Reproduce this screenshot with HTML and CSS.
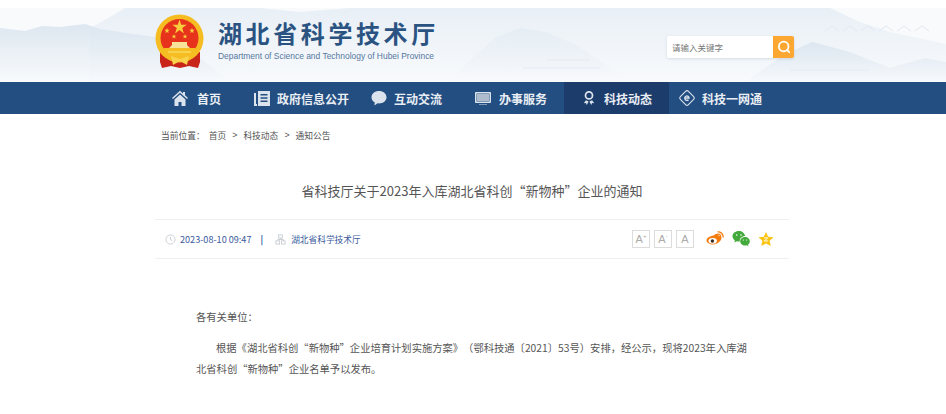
FILE: index.html
```html
<!DOCTYPE html>
<html lang="zh-CN">
<head>
  <meta charset="UTF-8" />
  <title>省科技厅关于2023年入库湖北省科创“新物种”企业的通知</title>
  <link rel="stylesheet" href="styles.css">
</head>
<body>
  <header class="banner">
    <svg class="banner-bg" viewBox="0 0 946 74" preserveAspectRatio="none" aria-hidden="true">
      <defs>
        <linearGradient id="fade" x1="0" y1="0" x2="0" y2="1">
          <stop offset="0" stop-color="#dde7f0"/>
          <stop offset="1" stop-color="#dde7f0" stop-opacity="0"/>
        </linearGradient>
        <linearGradient id="fadeLight" x1="0" y1="0" x2="0" y2="1">
          <stop offset="0" stop-color="#e8eff6"/>
          <stop offset="1" stop-color="#e8eff6" stop-opacity="0"/>
        </linearGradient>
      </defs>
      <path fill="url(#fadeLight)" d="M90 20L112 8 125 0H260L300 4 350 0H830L860 14 890 24 946 36V74H90Z"/>
      <path fill="url(#fade)" d="M0 20L25 23 42 18 60 19 85 16 100 21 120 24 160 30 200 50 230 74H0Z"/>
      <path fill="url(#fade)" opacity=".45" d="M470 52L495 30 520 20 545 24 575 36 610 60 630 74H450Z"/>
      <path fill="url(#fade)" d="M745 74L785 46 812 34 850 44 890 60 925 50 946 54V74Z"/>
      <path fill="none" stroke="#e0e9f2" d="M825 23l7-5 7 5M843 23l7-5 7 5M861 23l7-5 7 5M879 23l7-5 7 5M897 23l7-5 7 5M915 23l7-5 7 5"/>
      <path fill="none" stroke="#e3ebf3" d="M523 60H600M547 52H590M790 62H870"/>
    </svg>
    <div class="banner-inner">
      <div class="brand">
        <svg class="emblem" viewBox="0 0 50 54" aria-hidden="true">
          <path fill="#c8241a" d="M5 38h40v10l-2 6-9-2-9 2-9-2-9 2-2-6z"/>
          <circle cx="24.500" cy="24.500" r="24" fill="#f5bd22"/>
          <circle cx="24.500" cy="24" r="19" fill="#e8331c"/>
          <path fill="#f7cf3c" d="M24.500 5.500l1.700 5.300h5.500l-4.500 3.300 1.700 5.300-4.400-3.300-4.400 3.300 1.700-5.300-4.500-3.300h5.500zM12 13.800l.7 2h2.100l-1.700 1.300.6 2-1.700-1.200-1.700 1.200.6-2-1.700-1.300h2.100zM37 13.800l.7 2h2.100l-1.700 1.300.6 2-1.700-1.200-1.700 1.200.6-2-1.700-1.300h2.100zM19 20l.6 1.700h1.800l-1.400 1.100.5 1.700-1.500-1-1.500 1 .5-1.700-1.400-1.100h1.800zM30 20l.6 1.700h1.800l-1.400 1.100.5 1.700-1.500-1-1.500 1 .5-1.700-1.400-1.100h1.800z"/>
          <path fill="#f8e39a" d="M17 28h15v3l3 3H14l3-3z"/>
          <path fill="#f5bd22" d="M9 34h31l3 4-3 4-15 4-15-4-3-4z"/>
          <path fill="#f9d24e" d="M13 37h23v2H13zM16 42l9 3 9-3-2 9-7-4-7 4z"/>
        </svg>
        <div class="brand-text">
          <div class="brand-name">湖北省科学技术厅</div>
          <div class="brand-en">Department of Science and Technology of Hubei Province</div>
        </div>
      </div>
      <form class="search">
        <input class="search-input" type="text" placeholder="请输入关键字" />
        <button class="search-btn" type="button" aria-label="搜索">
          <svg viewBox="0 0 14 14" width="14" height="14"><circle cx="6.700" cy="6.500" r="4.800" fill="none" stroke="#fff" stroke-width="1.800"/><path d="M10 10l2.200 2.200" stroke="#fff" stroke-width="1.800" stroke-linecap="round"/></svg>
        </button>
      </form>
    </div>
  </header>

  <nav class="nav">
    <ul class="nav-list">
      <li class="nav-item home">
        <svg viewBox="0 0 16 16" width="16" height="16"><path fill="#dbe3ec" d="M8 .8L0 8l1 1 7-6.200L15 9l1-1-3-2.700V2h-2v1.500zM2.500 9.500V16h4v-4h3v4h4V9.500L8 4.500z"/></svg>
        首页
      </li>
      <li class="nav-item gov">
        <svg viewBox="0 0 16 16" width="16" height="16"><path fill="#dbe3ec" d="M0 3h2v11h1v2H0zM4 1h12v15H4zM6.500 4v1.500h7V4zm0 3.200v1.500h7V7.200zm0 3.300V12h7v-1.500z" fill-rule="evenodd"/></svg>
        政府信息公开
      </li>
      <li class="nav-item talk">
        <svg viewBox="0 0 16 16" width="16" height="16"><path fill="#dbe3ec" d="M8 1c4.200 0 7.500 2.700 7.500 6.200S12.200 13.400 8 13.400c-.5 0-1 0-1.500-.1L3.500 15.500l.2-3.200C1.700 11.200.5 9.300.5 7.200.5 3.700 3.800 1 8 1z"/></svg>
        互动交流
      </li>
      <li class="nav-item work">
        <svg viewBox="0 0 16 16" width="16" height="16"><path fill="#dbe3ec" d="M1 2h14a1 1 0 0 1 1 1v9a1 1 0 0 1-1 1H1a1 1 0 0 1-1-1V3a1 1 0 0 1 1-1zm.5 1.500v8h13v-8zM4 14.500h8V15H4z" fill-rule="evenodd"/><path fill="#aebccd" d="M2 4h12v7H2z"/></svg>
        办事服务
      </li>
      <li class="nav-item news active">
        <svg viewBox="0 0 16 16" width="14" height="16"><path fill="#dbe3ec" d="M8 0a5 5 0 1 1 0 10A5 5 0 0 1 8 0zm0 2a3 3 0 1 0 0 6 3 3 0 0 0 0-6zM4.500 10.500L2 14l2.500-.3L5.500 16l2-4zM11.500 10.500L14 14l-2.500-.3-1 2.300-2-4z" fill-rule="evenodd"/></svg>
        科技动态
      </li>
      <li class="nav-item net">
        <svg viewBox="0 0 18 18" width="18" height="18"><rect x="3.300" y="3.300" width="11.400" height="11.400" rx="2" transform="rotate(45 9 9)" fill="none" stroke="#dbe3ec" stroke-width="1.100"/><path fill="none" stroke="#dbe3ec" stroke-width="1.300" d="M6.700 9h4.400a2.200 2.200 0 1 0-.6 1.700"/></svg>
        科技一网通
      </li>
    </ul>
  </nav>

  <main class="page">
    <div class="crumbs">
      <span class="crumbs-label">当前位置：</span>
      <a>首页</a><span class="sep">&gt;</span><a>科技动态</a><span class="sep">&gt;</span><a>通知公告</a>
    </div>

    <h1 class="title">省科技厅关于2023年入库湖北省科创“新物种”企业的通知</h1>

    <div class="meta">
      <div class="meta-left">
        <svg viewBox="0 0 12 12" width="11" height="11"><circle cx="6" cy="6" r="5" fill="none" stroke="#c9cdd2"/><path d="M6 3v3.200l2 1" fill="none" stroke="#c9cdd2"/></svg>
        <span class="date">2023-08-10 09:47</span>
        <span class="bar">|</span>
        <svg viewBox="0 0 12 12" width="11" height="11"><g fill="none" stroke="#c9cdd2"><rect x="4" y="1" width="4" height="3.500"/><rect x="1" y="7.500" width="4" height="3.500"/><rect x="7" y="7.500" width="4" height="3.500"/><path d="M6 4.500V6M3 7.500V6h6v1.500"/></g></svg>
        <span class="source">湖北省科学技术厅</span>
      </div>
      <div class="meta-right">
        <span class="font-btn">A<sup>+</sup></span>
        <span class="font-btn">A<sup>-</sup></span>
        <span class="font-btn">A</span>
        <svg class="share first" viewBox="0 0 18 16" width="18" height="16"><path fill="#f47c0e" d="M7.500 4.500c2.200-1.900 4.500-2.200 5-1.100.3.700.2 1.300 0 1.900 1.500-.5 3-.2 3 1.500 0 3.200-4.300 6.700-8.500 6.700-3.200 0-6.500-1.700-6.500-4.300 0-1.700 3-4.300 7-4.700z"/><ellipse cx="6.700" cy="9.800" rx="4.200" ry="2.900" fill="#fff"/><circle cx="6.400" cy="10" r="1.700" fill="#3a2a20"/><path fill="none" stroke="#f47c0e" stroke-width="1.300" d="M11.500 .9c3-.4 6 1.900 5.600 5.600M11.800 3.100c1.500-.2 3 .9 2.800 2.600"/></svg>
        <svg class="share" viewBox="0 0 18 16" width="18" height="16"><path fill="#43a93c" d="M6.800 0C3.300 0 .5 2.300.5 5.300c0 1.700 1 3.200 2.400 4.200l-.6 2 2.300-1.200c.7.200 1.400.3 2.200.3.400 0 .6 0 .9-.1C7.500 7.300 10 5 13.200 5 12.600 2.100 10 0 6.800 0z"/><path fill="#43a93c" d="M17.800 10.200c0-2.400-2.200-4.300-4.800-4.300S8.200 7.800 8.200 10.200s2.200 4.300 4.800 4.300c.6 0 1.200-.1 1.800-.3l1.700 1-.5-1.600c1.100-.8 1.800-2 1.800-3.400z"/><circle cx="4.700" cy="4" r=".8" fill="#fff"/><circle cx="9" cy="4" r=".8" fill="#fff"/><circle cx="11.400" cy="9" r=".6" fill="#fff"/><circle cx="14.600" cy="9" r=".6" fill="#fff"/></svg>
        <svg class="share" viewBox="0 0 18 16" width="16" height="16"><path fill="#fbc415" d="M9 0l2.500 5.400 6 .7-4.400 4 1.200 5.900L9 13l-5.300 3 1.200-5.900-4.400-4 6-.7z"/><path fill="none" stroke="#fff" stroke-width="1" d="M6.800 6.800h4.200L7 10.200h4.300"/></svg>
      </div>
    </div>

    <div class="article">
      <p class="salute">各有关单位：</p>
      <p class="body-text">根据《湖北省科创“新物种”企业培育计划实施方案》（鄂科技通〔2021〕53号）安排，经公示，现将2023年入库湖北省科创“新物种”企业名单予以发布。</p>
    </div>
  </main>
</body>
</html>
```

FILE: styles.css
```css
* { box-sizing: border-box; }
html, body { height: 100%; }
body {
  margin: 0;
  padding-top: 8px;
  background: #fff;
  color: #333;
  font-family: "Noto Sans CJK SC", "Liberation Sans", sans-serif;
  text-spacing-trim: space-all;
  overflow: hidden;
}
ul { margin: 0; padding: 0; list-style: none; }

.banner {
  position: relative;
  height: 74px;
  overflow: hidden;
  background: #f8fafc;
}
.banner-bg {
  position: absolute;
  left: 0;
  top: 0;
  width: 100%;
  height: 100%;
}
.banner-inner {
  position: relative;
  width: 639px;
  height: 100%;
  margin-left: 155px;
  display: flex;
  justify-content: space-between;
  align-items: flex-start;
}
.brand { display: flex; padding-top: 6px; }
.emblem { width: 50px; height: 54px; }
.brand-text { margin-left: 13px; padding-top: 6px; }
.brand-name {
  font-size: 24px;
  line-height: 26px;
  font-weight: 700;
  letter-spacing: 3.600px;
  color: #2b5382;
}
.brand-en {
  margin-top: 4px;
  font-family: "Liberation Sans", sans-serif;
  font-size: 8.450px;
  line-height: 12px;
  color: #55779f;
  white-space: nowrap;
}
.search {
  display: flex;
  margin-top: 28px;
  height: 22px;
  width: 127px;
  border-radius: 2px;
  overflow: hidden;
  box-shadow: 0 1px 3px rgba(100, 120, 150, .2);
}
.search-input {
  flex: 1;
  min-width: 0;
  border: none;
  background: #fff;
  padding: 0 5px;
  font-size: 8.500px;
  font-family: inherit;
}
.search-input::placeholder { color: #777; }
.search-btn {
  width: 21px;
  padding: 0;
  border: none;
  background: #fda733;
  display: flex;
  align-items: center;
  justify-content: center;
}

.nav {
  height: 32px;
  background: #234e82;
}
.nav-list {
  display: flex;
  height: 100%;
  margin-left: 155px;
}
.nav-item {
  display: flex;
  align-items: center;
  gap: 8px;
  height: 100%;
  font-size: 12px;
  font-weight: 700;
  color: #e9eef4;
  white-space: nowrap;
}
.home { padding-left: 17px; width: 82px; gap: 9px; }
.gov { padding-left: 17px; width: 120px; gap: 7px; }
.talk { padding-left: 14px; width: 104px; gap: 7px; }
.work { padding-left: 14px; width: 103px; }
.news { padding-left: 18px; width: 105px; }
.net { padding-left: 9px; gap: 6px; }
.active { background: #1c3c6b; }

.page {
  width: 634px;
  margin-left: 155px;
}
.crumbs {
  display: flex;
  align-items: center;
  height: 42px;
  padding-left: 6px;
  font-size: 8.750px;
  color: #555;
}
.crumbs-label { margin-right: 4px; }
.sep { margin: 0 6px; font-family: "Liberation Sans", sans-serif; }
.title {
  margin: 0;
  padding-top: 24px;
  height: 63px;
  line-height: 22px;
  font-size: 13px;
  font-weight: 400;
  color: #555;
  text-align: center;
}
.meta {
  display: flex;
  align-items: center;
  justify-content: space-between;
  height: 40px;
  border-top: 1px solid #f0f0f0;
  border-bottom: 1px solid #f0f0f0;
  padding-left: 10px;
}
.meta-left, .meta-right { display: flex; align-items: center; }
.date, .source { font-size: 9.100px; color: #3a5a9b; }
.date { margin-left: 4px; }
.bar { margin: 0 12px 0 9px; font-size: 9px; font-weight: 700; color: #2c5a9e; }
.source { margin-left: 5px; font-size: 8.700px; }
.meta-right { padding-right: 15px; }
.font-btn {
  width: 18px;
  height: 18px;
  margin-right: 4px;
  border: 1px solid #dcdcdc;
  color: #aaa;
  font-family: "Liberation Sans", sans-serif;
  font-size: 11px;
  line-height: 16px;
  text-align: center;
}
.font-btn sup { font-size: 6px; line-height: 0; }
.share { margin-right: 8px; }
.share.first { margin-left: 8px; }
.share:last-child { margin-right: 0; }

.article {
  padding: 48px 39px 0 41px;
  font-size: 10.300px;
  line-height: 20px;
  color: #555;
}
.article p { margin: 0; }
.salute { margin-bottom: 11px !important; }
.body-text { text-indent: 20px; line-height: 20.600px; }
```
